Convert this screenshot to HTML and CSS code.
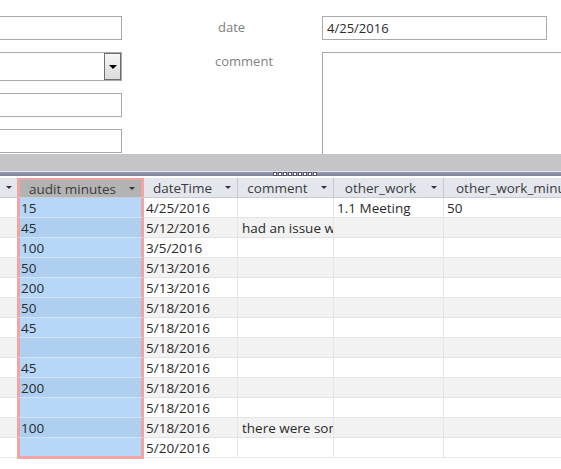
FILE: index.html
```html
<!DOCTYPE html>
<html>
<head>
<meta charset="utf-8">
<link rel="stylesheet" href="styles.css">
</head>
<body>
<div class="page">
  <div class="form">
    <div class="left">
      <div class="input"></div>
      <div class="input combo"><div class="btn"><span class="tri"></span></div></div>
      <div class="input"></div>
      <div class="input"></div>
    </div>
    <div class="right">
      <div class="label label-date">date</div>
      <div class="input date">4/25/2016</div>
      <div class="label label-comment">comment</div>
      <div class="input memo"></div>
    </div>
  </div>
  <div class="band"></div>
  <div class="split"><div class="dots"><i></i><i></i><i></i><i></i><i></i><i></i><i></i><i></i><i></i></div></div>
  <div class="grid">
    <div class="row head">
      <div class="c c0"><span class="arr"></span></div>
      <div class="c c1 sel"><span class="t">audit minutes</span><span class="arr"></span></div>
      <div class="c c2"><span class="t">dateTime</span><span class="arr"></span></div>
      <div class="c c3"><span class="t">comment</span><span class="arr"></span></div>
      <div class="c c4"><span class="t">other_work</span><span class="arr"></span></div>
      <div class="c c5"><span class="t">other_work_minutes</span></div>
    </div>
    <div class="row"><div class="c c0"></div><div class="c c1">15</div><div class="c c2">4/25/2016</div><div class="c c3"></div><div class="c c4">1.1 Meeting</div><div class="c c5">50</div></div>
    <div class="row alt"><div class="c c0"></div><div class="c c1">45</div><div class="c c2">5/12/2016</div><div class="c c3">had an issue with</div><div class="c c4"></div><div class="c c5"></div></div>
    <div class="row"><div class="c c0"></div><div class="c c1">100</div><div class="c c2">3/5/2016</div><div class="c c3"></div><div class="c c4"></div><div class="c c5"></div></div>
    <div class="row alt"><div class="c c0"></div><div class="c c1">50</div><div class="c c2">5/13/2016</div><div class="c c3"></div><div class="c c4"></div><div class="c c5"></div></div>
    <div class="row"><div class="c c0"></div><div class="c c1">200</div><div class="c c2">5/13/2016</div><div class="c c3"></div><div class="c c4"></div><div class="c c5"></div></div>
    <div class="row alt"><div class="c c0"></div><div class="c c1">50</div><div class="c c2">5/18/2016</div><div class="c c3"></div><div class="c c4"></div><div class="c c5"></div></div>
    <div class="row"><div class="c c0"></div><div class="c c1">45</div><div class="c c2">5/18/2016</div><div class="c c3"></div><div class="c c4"></div><div class="c c5"></div></div>
    <div class="row alt"><div class="c c0"></div><div class="c c1"></div><div class="c c2">5/18/2016</div><div class="c c3"></div><div class="c c4"></div><div class="c c5"></div></div>
    <div class="row"><div class="c c0"></div><div class="c c1">45</div><div class="c c2">5/18/2016</div><div class="c c3"></div><div class="c c4"></div><div class="c c5"></div></div>
    <div class="row alt"><div class="c c0"></div><div class="c c1">200</div><div class="c c2">5/18/2016</div><div class="c c3"></div><div class="c c4"></div><div class="c c5"></div></div>
    <div class="row"><div class="c c0"></div><div class="c c1"></div><div class="c c2">5/18/2016</div><div class="c c3"></div><div class="c c4"></div><div class="c c5"></div></div>
    <div class="row alt"><div class="c c0"></div><div class="c c1">100</div><div class="c c2">5/18/2016</div><div class="c c3">there were some</div><div class="c c4"></div><div class="c c5"></div></div>
    <div class="row last"><div class="c c0"></div><div class="c c1"></div><div class="c c2">5/20/2016</div><div class="c c3"></div><div class="c c4"></div><div class="c c5"></div></div>
  </div>
</div>
</body>
</html>
```
FILE: styles.css
```css
html, body {
  margin: 0;
  padding: 0;
  background: #ffffff;
}
.page {
  width: 561px;
  height: 469px;
  overflow: hidden;
  font-family: "Open Sans", "Noto Sans", sans-serif;
  font-size: 12px;
  color: #2b2b2b;
}
.form {
  height: 154px;
  display: flex;
  overflow: hidden;
}
.left {
  margin-left: -30px;
  width: 152px;
  flex: none;
  padding-top: 16px;
  display: flex;
  flex-direction: column;
  gap: 12px;
}
.input {
  box-sizing: border-box;
  height: 24px;
  border: 1px solid #a9a9a9;
  background: #fff;
}
.combo {
  height: 29px;
  display: flex;
  justify-content: flex-end;
}
.btn {
  box-sizing: border-box;
  width: 17px;
  height: 27px;
  border: 1px solid #6f6f6f;
  background: linear-gradient(#f6f6f6, #dcdcdc);
  display: flex;
  align-items: center;
  justify-content: center;
}
.tri {
  width: 0;
  height: 0;
  border-left: 4px solid transparent;
  border-right: 4px solid transparent;
  border-top: 4px solid #000;
}
.right {
  flex: none;
  padding-top: 16px;
  display: grid;
  grid-template-columns: 200px 225px;
  grid-template-rows: 24px auto;
  row-gap: 12px;
}
.label {
  color: #7f7f7f;
  font-size: 13px;
}
.label-date {
  padding-left: 96px;
  line-height: 22px;
}
.label-comment {
  padding-left: 93px;
  line-height: 18px;
}
.date {
  font-size: 13px;
  line-height: 22px;
  padding-left: 4px;
  color: #2b2b2b;
}
.memo {
  width: 260px;
  height: 110px;
}
.band {
  height: 17px;
  background: #c5c5c7;
}
.split {
  height: 5px;
  background: linear-gradient(#e6e6ee 0, #e6e6ee 1px, #9b9bb3 1px, #7f7f96 5px);
  display: flex;
  align-items: center;
}
.dots {
  margin-left: 273px;
  display: flex;
  gap: 1px;
}
.dots i {
  display: block;
  width: 2px;
  height: 2px;
  background: #fff;
  border: 1px solid #55556a;
}
.grid {
  padding-top: 2px;
}
.row {
  display: flex;
  height: 20px;
  box-sizing: border-box;
  border-bottom: 1px solid #e4e4e4;
  background: #ffffff;
}
.row.alt {
  background: #f2f2f2;
}
.row.last {
  border-bottom: 1px solid #e8e8e8;
}
.c {
  flex: none;
  box-sizing: border-box;
  height: 19px;
  line-height: 20px;
  padding-left: 3px;
  white-space: nowrap;
  overflow: hidden;
  border-right: 1px solid #e8e4df;
  font-size: 13.5px;
}
.c0 { width: 17px; border-right: none; }
.c1 {
  width: 127px;
  border-left: 3px solid #f1a4a4;
  border-right: 3px solid #f1a4a4;
  background: #b7d7f8;
  padding-left: 1px;
}
.row.alt .c1 { background: #afcff1; }
.row .c1 { height: 20px; margin-bottom: -1px; border-bottom: 1px solid #cfe2f7; }
.row.last .c1 { border-bottom: 3px solid #f1a4a4; height: 21px; margin-bottom: -2px; }
.c2 { width: 94px; padding-left: 2px; }
.c3 { width: 96px; padding-left: 4px; }
.c4 { width: 110px; padding-left: 3px; }
.c5 { width: 160px; padding-left: 3px; border-right: none; }

.head {
  height: 20px;
  background: #e3e7ed;
  border-bottom: 1px solid #c9ccd2;
}
.head .c {
  height: 19px;
  display: flex;
  align-items: center;
  padding-left: 0;
  border-right: 1px solid #c4c7cc;
  color: #3c3c3c;
  background: transparent;
}
.head .c .t {
  flex: 1;
  text-align: center;
}
.head .c0 { justify-content: center; border-right: none; }
.head .c1 {
  background: #b3b3b3;
  border-top: 2px solid #f1a4a4;
  border-bottom: none;
  border-right: 3px solid #f1a4a4;
  border-left: 3px solid #f1a4a4;
  margin-bottom: 0;
  height: 19px;
}
.head .c5 .t { text-align: left; padding-left: 12px; flex: none; }
.arr {
  flex: none;
  width: 0;
  height: 0;
  margin: 0 6px 0 4px;
  border-left: 3px solid transparent;
  border-right: 3px solid transparent;
  border-top: 3px solid #333;
}
.head .c0 .arr { margin: 0; }
```
